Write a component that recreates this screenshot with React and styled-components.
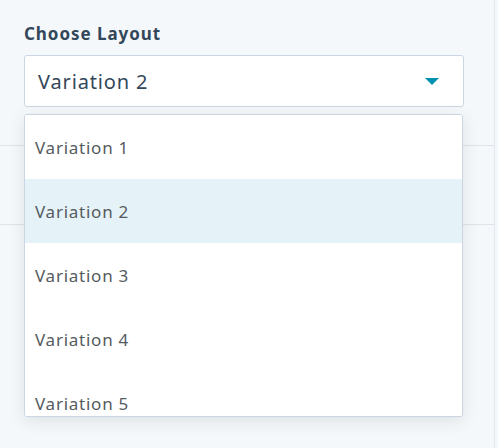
import React from 'react'
import styled, { createGlobalStyle } from 'styled-components'

const GlobalStyle = createGlobalStyle`
    body {
        margin: 0;
        background: #f5f8fa;
        font-family: "Noto Sans", "DejaVu Sans", sans-serif;
    }
`

const options = ['Variation 1', 'Variation 2', 'Variation 3', 'Variation 4', 'Variation 5']

const App = () => {
    const selected = 'Variation 2'
    return (
        <>
            <GlobalStyle />
            <Panel>
                <Field>
                    <Label>Choose Layout</Label>
                    <Select>
                        <Value>{selected}</Value>
                        <Caret width="14" height="7" viewBox="0 0 14 7">
                            <path d="M0 0 H14 L7 7 Z" fill="#0091ae" />
                        </Caret>
                    </Select>
                    <Menu>
                        {options.map((o) => (
                            <Option key={o} active={o === selected}>{o}</Option>
                        ))}
                    </Menu>
                </Field>
                <Divider />
            </Panel>
        </>
    )
}

const Panel = styled.div`
    width: 495px;
    height: 448px;
    border-right: 1px solid #e4e9ef;
    padding-top: 21px;
    box-sizing: border-box;
`

const Field = styled.div`
    position: relative;
    display: flex;
    flex-direction: column;
    gap: 8px;
    padding: 0 30px 0 24px;
`

const Label = styled.div`
    font-size: 17px;
    font-weight: 700;
    line-height: 26px;
    letter-spacing: 0.95px;
    color: #33475b;
`

const Select = styled.div`
    height: 52px;
    box-sizing: border-box;
    display: flex;
    align-items: center;
    justify-content: space-between;
    padding: 0 24px 0 13px;
    background: #fff;
    border: 1px solid #cbd6e2;
    border-radius: 3px;
`

const Value = styled.span`
    font-size: 20px;
    letter-spacing: 0.85px;
    color: #33475b;
`

const Caret = styled.svg`
    display: block;
`

const Menu = styled.div`
    position: absolute;
    top: 93px;
    left: 24px;
    width: 439px;
    height: 303px;
    overflow: hidden;
    background: #fff;
    border: 1px solid #cbd6e2;
    border-radius: 3px;
    box-sizing: border-box;
    box-shadow: 0 4px 16px rgba(45, 62, 80, 0.12);
    z-index: 2;
`

const Option = styled.div`
    height: 64px;
    display: flex;
    align-items: center;
    padding: 0 10px;
    font-size: 17px;
    letter-spacing: 0.75px;
    color: #555b60;
    background: ${(p) => (p.active ? '#e5f3f8' : '#fff')};
`

const Divider = styled.div`
    margin-top: 38px;
    height: 78px;
    border-top: 1px solid #dfe3eb;
    border-bottom: 1px solid #dfe3eb;
`

export default App
